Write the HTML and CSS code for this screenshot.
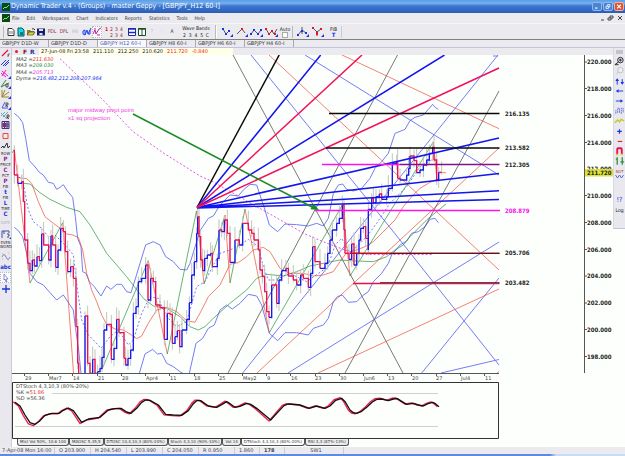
FILE: index.html
```html
<!DOCTYPE html>
<html lang="en">
<head>
<meta charset="utf-8">
<title>Dynamic Trader</title>
<link rel="stylesheet" href="styles.css">
</head>
<body>
<header class="titlebar">
  <svg class="logo" viewBox="0 0 8 8"><rect width="8" height="8" fill="#064a16"/><path d="M1 6L3 4L4 5L7 2" stroke="#7fe07f" fill="none"/></svg>
  <h1>Dynamic Trader v.4 - (Groups) - master Geppy - [GBPJPY_H12 60-I]</h1>
  <button class="win" aria-label="Minimize"><svg viewBox="0 0 9 9"><path d="M2 6.500h3" stroke="#fff" stroke-width="1.500"/></svg></button>
  <button class="win" aria-label="Restore"><svg viewBox="0 0 9 9"><path d="M2 4h3v3h-3zM4 4v-2h3v3h-2" stroke="#fff" fill="none"/></svg></button>
  <button class="win close" aria-label="Close"><svg viewBox="0 0 9 9"><path d="M2 2l5 5M7 2l-5 5" stroke="#fff" stroke-width="1.500"/></svg></button>
</header>
<nav class="menu">
  <svg class="logo" viewBox="0 0 8 8"><rect width="8" height="8" fill="#0a4a12"/><path d="M1 6L3 4L4 5L7 2" stroke="#7fe07f" fill="none"/></svg>
  <button>File</button><button>Edit</button><button>Workspaces</button><button>Chart</button><button>Indicators</button><button>Reports</button><button>Statistics</button><button>Tools</button><button>Help</button>
  <svg class="docwin" viewBox="0 0 24 8"><path d="M2 6h3M9 4h3v2h-3zM11 4v-2h3v2h-2M19 2l4 4M23 2l-4 4" stroke="#444" fill="none"/></svg>
</nav>
<div class="toolbar">
  <div class="group files">
    <button aria-label="New"><svg viewBox="0 0 10 12"><path d="M2 2.500h4l2 2v5h-6z" fill="#fff" stroke="#333"/><path d="M4 5v3M6 5v3" stroke="#444" stroke-width=".700"/></svg></button>
    <button aria-label="New chart"><svg viewBox="0 0 10 12"><path d="M2 2h4l2 2v6h-6z" fill="#18d8e8" stroke="#155"/><path d="M4 6h3v3h-3z" fill="#0a7a8a"/></svg></button>
    <button aria-label="Open"><svg viewBox="0 0 10 12"><path d="M1 9v-5h3l1 1h3v4z" fill="#8a8420"/><path d="M1 9l2-3h6l-2 3z" fill="#dcd430" stroke="#333" stroke-width=".600"/><path d="M6 3q2-1 3 1" fill="none" stroke="#333"/></svg></button>
    <button aria-label="Save"><svg viewBox="0 0 10 12"><path d="M1 2.500h8v7h-8z" fill="#15206a"/><path d="M3 3h4v2h-4zM3.500 7h3v2h-3z" fill="#dde"/></svg></button>
    <button class="wide">PDL</button><button class="wide">DPL</button><button class="off">H4</button>
  </div>
  <div class="group">
    <button aria-label="Swing"><svg viewBox="0 0 10 12"><path d="M1 5v3l2 1 2-5 1 4 3-6M1 5l2-1v5M6 8h2v-4" stroke="#1c40f0" fill="none"/></svg></button>
    <button class="on" aria-label="Swing pattern"><svg viewBox="0 0 10 12"><path d="M1 8l2-4 1 4 3-5 2-1M2 3h2M5 9h3" stroke="#c0208a" fill="none"/></svg></button>
  </div>
  <div class="nums"><span class="pick">1</span><span>2</span><span>3</span><span>4</span><span></span><span>2</span><span>3</span><span>4</span></div>
  <div class="group">
    <button aria-label="Tile rows"><svg viewBox="0 0 10 12"><path d="M1.500 2.500h7v7h-7z" fill="#fff" stroke="#2028b0"/><path d="M1 3h8M1 6.500h8" stroke="#2028b0" stroke-width="1.400"/></svg></button>
    <button aria-label="Tile columns"><svg viewBox="0 0 10 12"><path d="M1.500 2.500h7v7h-7zM5 3v7" fill="#fff" stroke="#174f20"/><path d="M1 3h8" stroke="#174f20" stroke-width="1.400"/></svg></button>
    <button class="off">?</button><button class="off">⁝</button><button>A</button>
  </div>
  <div class="bands"><span>Wave Bands</span><span>2 &nbsp;3 &nbsp;4 &nbsp;5 &nbsp;C</span></div>
  <div class="group draw">
    <button aria-label="Low swing"><svg viewBox="0 0 15 12"><path d="M3 3l3 5 3-3" stroke="#555" fill="none"/><path d="M2 2h2v2h-2zM5 7h2v2h-2zM8 4h2v2h-2zM13 8v3h-3z" fill="#1530f0"/></svg></button>
    <button aria-label="High swing"><svg viewBox="0 0 15 12"><path d="M2 8l5-5 3 4" stroke="#555" fill="none"/><path d="M6 2h2v2h-2z" fill="#e12"/><path d="M13 8v3h-3z" fill="#1530f0"/></svg></button>
    <button aria-label="Three point low"><svg viewBox="0 0 15 12"><path d="M1 8l3-4 4 4 3-4" stroke="#555" fill="none"/><path d="M0 7h2v2h-2zM3 3h2v2h-2zM7 7h2v2h-2zM13 8v3h-3zM10 3h2v2h-2z" fill="#1530f0"/></svg></button>
    <button aria-label="Three point high"><svg viewBox="0 0 15 12"><path d="M1 3l3 5 3-3 2 3 3-5" stroke="#555" fill="none"/><path d="M0 2h2v2h-2zM3 7h2v2h-2zM6 4h2v2h-2zM9 7h2v2h-2z" fill="#e12"/><path d="M13 8v3h-3z" fill="#1530f0"/></svg></button>
    <label class="auto">Auto<input type="checkbox"></label>
  </div>
  <div class="group draw last">
    <button aria-label="Low fork"><svg viewBox="0 0 15 12"><path d="M2 9l4-5 4 3M6 1v7" stroke="#555" fill="none"/><path d="M1 8h2v2h-2zM5 4h2v2h-2zM9 6h2v2h-2zM13 8v3h-3z" fill="#1530f0"/></svg></button>
    <button aria-label="High fork"><svg viewBox="0 0 15 12"><path d="M2 2l4 4 4-3M6 5v5" stroke="#555" fill="none"/><path d="M1 1h2v2h-2zM5 6h2v3h-2zM9 2h2v2h-2z" fill="#e12"/><path d="M13 8v3h-3z" fill="#1530f0"/></svg></button>
    <button class="fib"><span>FIB</span><b>T</b></button>
  </div>
</div>
<nav class="tabs">
  <button>GBPJPY D1D-W</button><button>GBPJPY D1D-D</button><button class="active">GBPJPY H12 60-I</button><button>GBPJPY H8 60-I</button><button>GBPJPY H6 60-I</button><button>GBPJPY H4 60-I</button>
</nav>
<div class="work">
  <aside class="rail left">
    <button aria-label="Trend line"><svg viewBox="0 0 11 10"><path d="M2 8l6-6" stroke="#e8123c" stroke-width="1.300"/><path d="M8 6h2M8 6v3M8 7.500h1" stroke="#444" fill="none" stroke-width=".700"/></svg></button>
    <button aria-label="Parallel lines"><svg viewBox="0 0 11 10"><path d="M1 7l5-5M3 8l6-6M5 8l4-4" stroke="#1836f0"/></svg></button>
    <button aria-label="Fork"><svg viewBox="0 0 11 10"><path d="M2 2l6 5M2 7l4-6M1 4l5 4" stroke="#f018c8"/><path d="M11 7v3h-3z" fill="#1530f0"/></svg></button>
    <button aria-label="Fan"><svg viewBox="0 0 11 10"><path d="M1 8l5-7M1 8l8-4" stroke="#2a9038"/><path d="M6 5h2v3h-2z" stroke="#555" fill="none"/><path d="M11 7v3h-3z" fill="#1530f0"/></svg></button>
    <button aria-label="Gann fan"><svg viewBox="0 0 11 10"><path d="M2 1v7h7M2 8l3-7M2 8l7-5" stroke="#9a8a20" fill="none"/><path d="M11 7v3h-3z" fill="#1530f0"/></svg></button>
    <button aria-label="Angle"><svg viewBox="0 0 11 10"><path d="M2 8l3-6M2 8h6" stroke="#4058f0"/><path d="M6 7v-4h2v2h-2l2 2" stroke="#333" fill="none" stroke-width=".800"/><path d="M11 7v3h-3z" fill="#1530f0"/></svg></button>
    <button aria-label="Channels"><svg viewBox="0 0 11 10"><path d="M1 6l4-4M3 7l5-5M1 3l5 5" stroke="#68a8b8"/><path d="M7 9v-4h2v2h-2l2 2" stroke="#333" fill="none" stroke-width=".800"/></svg></button>
    <button aria-label="Grid"><svg viewBox="0 0 11 10"><path d="M2 1.500h7v7h-7zM2 4h7M2 6h7M4.500 1v7M7 1v7" stroke="#423080" fill="#ddd"/><path d="M3 3h3v4h-3z" fill="#8a2a70"/></svg></button>
    <button aria-label="Rectangle"><svg viewBox="0 0 11 10"><path d="M3 2.500h5v5h-5z" stroke="#f04838" fill="none"/></svg></button>
    <button aria-label="Wave label"><svg viewBox="0 0 11 10"><path d="M1 7l2-2 1 2 3-5 1 5 2-2" stroke="#233" fill="none"/></svg></button>
    <button class="txt purple">ROW<b>P</b></button>
    <button class="txt purple">PRICE<b>C</b></button>
    <button class="txt purple">PCT<b>P</b></button>
    <button class="txt">FIB<b>t</b></button>
    <button class="txt">FIB<b>L</b></button>
    <button class="txt">TIME<b>C</b></button>
    <button class="txt dim">DATE</button>
    <button aria-label="Time projection"><svg viewBox="0 0 11 10"><path d="M2 9v-7h7v2M4 2v3" stroke="#4050b0" fill="none"/><path d="M7 5h2v2h-1v2" stroke="#555" fill="none"/><path d="M11 8v2h-2z" fill="#1530f0"/></svg></button>
    <button class="txt">EVEN<br>WORD</button>
    <button aria-label="Cycle"><svg viewBox="0 0 11 10"><path d="M2 6q2-5 4 0t4 0" stroke="#8a80e8" fill="none"/><path d="M2 3h1M8 2h1M2 8h1M8 9h1" stroke="#d8cc20"/></svg></button>
    <button class="txt"><b>abc</b></button>
    <button class="on" aria-label="Pointer"><svg viewBox="0 0 11 10"><path d="M4 1l4 5h-2l1 3-1 0-1-3-1 1z" fill="#fff" stroke="#5a64c8" stroke-width=".700"/></svg></button>
    <button aria-label="Crosshair"><svg viewBox="0 0 11 10"><path d="M6 1v8M2 5h8" stroke="#1836d8" stroke-width="1.300"/></svg></button>
  </aside>
  <main>
    <div class="quote"><i></i><b class="f">F</b><b class="r">R</b>
      <div class="readout"><span>27-Jun-08 Fri 23:58</span><span>211.110</span><span>212.250</span><span>210.620</span><span class="red">211.720</span><span class="red">-0.840</span></div>
    </div>
    <svg class="chart" viewBox="12 55 601 384">
      <defs><clipPath id="plot"><path d="M12 55h488v318h-488z"/></clipPath></defs>
      <g clip-path="url(#plot)">
        <g class="thin">
          <path class="gray" d="M233 55L403 373M397.500 55L228 373M345 373L499 91"/>
          <path class="blue" d="M251 55L392 230L499 365M305 55L499 175M498 55L242.700 373M288 373L499 242M421.700 373L499 278M441 373L499 359.500M493 56h5"/>
          <path class="red" d="M269 55L499 270M342 55L499 128.700M257 373L499 148M318 373L499 289M497 373l2-1.500"/>
        </g>
        <path class="dots pink" d="M60 58.700L101.700 98.700L133 131.700L165 154L200 176L213 181.700L305 234L327 243.300L347 250.700L360 254.500H433"/>
        <g transform="scale(.333333)" class="third">
          <g class="blue">
            <path d="M43 340L57 352L68 368L77 415L88 482L103 498L118 517L130 525L145 547L160 550L170 568L180 562L190 554L200 570L218 592L226 650L233 715L243 740L248 815L258 820L268 845L283 860L303 888L320 858L333 868L350 853L365 853L380 875L393 878L405 840L420 790L437 735L460 725L480 735L497 770L520 785L540 808L560 810L570 790L600 692L625 655L640 648L660 615L690 585L715 588L730 570L750 553L770 555L780 585L795 630L808 675L833 695L855 672L890 674L925 678L950 670L970 678L985 655L1000 580L1015 555L1028 552L1040 568L1060 573L1085 565L1110 535L1125 505L1145 485L1165 460L1185 400L1215 388L1230 362L1245 352L1270 345L1285 328L1298 313L1305 322L1315 328"/>
            <path d="M43 682L55 692L68 710L80 760L90 820L110 845L130 855L150 878L170 900L190 885L208 912L220 930L226 980L236 1050L243 1120M418 1120L435 1062L458 1048L472 1062L485 1060L500 1090L520 1100L540 1115L552 1122M568 1120L588 1030L608 1015L625 985L643 975L660 930L680 915L697 927L720 910L745 883L770 888L785 915L808 1000L833 1022L855 998L890 998L925 1005L940 985L970 975L985 955L1000 905L1012 890L1027 885L1045 907L1070 905L1088 887L1105 875L1120 845L1145 820L1165 790L1175 765L1200 735L1220 723L1235 700L1255 695L1275 680L1290 658L1305 655L1315 668"/>
          </g>
          <path class="red" d="M50 532L80 536L95 550L115 605L135 650L160 670L185 688L200 702L215 704L235 712L248 750L260 820L275 870L290 905L305 945L320 973L345 987L370 990L390 1002L410 1016L425 1008L445 970L470 930L500 922L530 935L560 962L585 967L605 930L625 890L660 855L690 793L715 788L740 770L760 750L790 742L810 755L840 805L870 820L910 820L940 828L970 825L1000 815L1020 785L1040 758L1070 750L1100 738L1120 725L1140 705L1155 690L1185 660L1210 620L1235 590L1260 565L1285 550L1310 538M1316 518H1338"/>
          <path class="green" d="M70 550L90 552L120 578L150 598L200 622L240 635L270 675L297 720L320 760L380 830L430 895L460 918L500 925L540 950L570 980L595 990L615 980L640 955L690 910L740 870L770 835L800 823L850 828L890 815L930 798L980 788L1020 780L1050 782L1120 785L1160 770L1185 750L1210 735L1230 710L1280 660L1310 635L1338 612"/>
          <path class="dots blue" d="M50 520L70 550L85 630L100 665L125 685L145 710L165 705L200 740L220 765L230 850L245 960L265 1005L285 1025L303 1045L330 1010L355 990L385 1035L400 1020L425 940L450 890L475 895L500 950L530 980L560 965L590 860L615 845L640 795L660 760L690 750L720 735L745 718L775 740L790 800L805 840L825 840L870 820L920 845L970 810L990 780L1005 735L1025 715L1050 760L1100 710L1130 670L1170 610L1220 560L1260 500L1295 480"/>
        </g>
        <g class="thin">
          <path class="red" d="M14.300 149L30 283M62.700 222.700L73.500 373M148.300 260.700L167.300 354M196.500 211L204 284M225 215L230 283M245 209L269.300 332.700M342.300 205L350 276M433.300 142L437 180"/>
          <path class="green" d="M12 153l2.500-4M30 283L62.700 222.700M101.700 370L148.300 260.700M167.300 354L196.500 211M204 284L225 215M230 283L245 209M269.300 332.700L342.300 205M350 276L433.300 142"/>
        </g>
        <g id="bars" transform="scale(.333333)"></g>
        <g class="fan">
          <path stroke="#080808" d="M197 207.500L279.200 55"/>
          <path stroke="#1414f0" d="M197 207.500L320.700 55M197 207.500L444.500 55M197 207.500L499 138M197 207.500L499 173.500M197 207.500L499 190.700M197 208L499 199.500"/>
          <path stroke="#f4105c" d="M197 207.500L362 55M197 207.500L499 68"/>
        </g>
        <g class="levels">
          <path stroke="#080808" d="M329 113.500H499.500M326 148H499.500"/>
          <path stroke="#ff10f0" d="M322 164.500H400M315 210.500H501"/>
          <path stroke="#85108c" d="M400 164.500H499.500"/>
          <path stroke="#c4101c" d="M350 253.200H499.500"/>
          <path stroke="#e8104c" d="M353 283.500H499.500"/>
          <path class="overlay" d="M380 282.500H499.500M390 253.500H499.500"/>
        </g>
        <path d="M133 114L312 207" stroke="#1c8a26" stroke-width="1.500"/><path d="M319 210l-8.500-.800 3-5.600z" fill="#1c8a26"/>
      </g>
      <g class="notes"><text x="68" y="112">major midway pivot point</text><text x="68" y="120">x1 sq projection</text></g>
      <g class="legend">
        <text x="16" y="61">MA2 =<tspan fill="#f03028">211.630</tspan></text><text x="16" y="67">MA3 =<tspan fill="#268a42">209.030</tspan></text>
        <text x="16" y="74">MA4 =<tspan fill="#f030dc">205.713</tspan></text><text x="16" y="80">Dyma =<tspan fill="#2030f0">216.482,212.208,207.964</tspan></text>
      </g>
      <g class="price">
        <text x="505" y="116">216.135</text><text x="505" y="150">213.582</text><text x="505" y="167">212.305</text><text x="505" y="213" fill="#f810ec">208.879</text><text x="505" y="255">205.706</text><text x="505" y="285">203.482</text>
        <text x="587" y="64">220.000</text><text x="587" y="91">218.000</text><text x="587" y="118">216.000</text><text x="587" y="145">214.000</text><text x="587" y="171">212.000</text><text x="587" y="198">210.000</text><text x="587" y="225">208.000</text><text x="587" y="252">206.000</text><text x="587" y="278">204.000</text><text x="587" y="305">202.000</text><text x="587" y="332">200.000</text><text x="587" y="359">198.000</text>
        <path fill="#dce03c" d="M585 169h28v7.500h-28z"/><text x="587" y="175">211.720</text>
      </g>
      <path class="axis" d="M584.500 55V373M585 62h2M585 88.500h2M585 115.500h2M585 142.500h2M585 195.500h2M585 222.500h2M585 249.500h2M585 276h2M585 303h2M585 329.500h2M585 356.500h2M12 373.500H499M24.500 373v3M48.500 373v3M72.500 373v3M97.500 373v3M121.500 373v3M145.500 373v3M169.500 373v3M194.500 373v3M218.500 373v3M242.500 373v3M266.500 373v3M290.500 373v3M315.500 373v3M339.500 373v3M363.500 373v3M387.500 373v3M411.500 373v3M436.500 373v3M460.500 373v3M484.500 373v3"/>
      <g class="dates"><text x="25" y="380">29</text><text x="49" y="380">Mar7</text><text x="73" y="380">14</text><text x="98" y="380">21</text><text x="122" y="380">28</text><text x="146" y="380">Apr4</text><text x="170" y="380">11</text><text x="194" y="380">18</text><text x="219" y="380">25</text><text x="243" y="380">May2</text><text x="267" y="380">9</text><text x="291" y="380">16</text><text x="315" y="380">23</text><text x="340" y="380">30</text><text x="364" y="380">Jun6</text><text x="388" y="380">13</text><text x="412" y="380">20</text><text x="436" y="380">27</text><text x="461" y="380">Jul4</text><text x="485" y="380">11</text></g>
      <path class="pane" d="M12.500 382.500H498.500V438.500H12.500z"/>
      <path stroke="#d0d0d0" d="M52 393.500H438M15 426.500H438"/>
      <g class="oscillator" transform="translate(0 370) scale(.333333)">
        <use href="#stoch" class="fast" transform="translate(-5 -9) scale(1 1.080)"/>
        <path id="stoch" d="M45 97L60 108L75 135L90 158L105 163L120 152L135 136L155 130H178L190 121L205 114L220 122L245 157L265 147L300 142L325 120L345 116L363 115L380 126L393 130L410 115L425 97L437 90L450 91L475 105L497 133L520 135L545 136L565 122L580 101L590 92L602 92L625 108L650 112L665 104L680 95L690 101L705 112L720 109L740 100L752 103L770 115L812 150L835 125L852 107L865 102L900 105L928 115L950 108L975 115L990 108L1007 91L1025 85L1036 96L1050 120L1060 128L1070 130L1085 124L1100 112L1117 96L1130 88L1145 87L1165 92L1180 87L1192 86L1205 94L1220 103L1240 100L1255 105L1270 108L1284 101L1298 97L1306 101L1317 110"/>
      </g>
      <g class="study"><text x="16" y="388">DTStoch 4,3,10,3 (80%-20%)</text><text x="16" y="394">%K =<tspan fill="#f02028">51.86</tspan></text><text x="16" y="400">%D =56.36</text></g>
    </svg>
    <div class="studies"><button>Mist Vol 50%, 10.6 100</button><button>MAOSC 5,35,5</button><button>DTOSC 10,4,10,3 (80%-20%)</button><button>Stoch 4,3,10 (90%-10%)</button><button>Vol 14</button><button class="active">DTStoch 4,3,10,3 (80%-20%)</button><button>RSI 3,3 (87%-13%)</button></div>
  </main>
  <aside class="rail right">
    <div class="grip"></div>
    <button aria-label="Zoom"><svg viewBox="0 0 12 10"><circle cx="7" cy="4" r="3" fill="#dde" stroke="#222"/><path d="M5 6l-4 3h4M5.500 4h3M7 2.500v3" stroke="#222" fill="none"/></svg></button>
    <button aria-label="Zoom out"><svg viewBox="0 0 12 10"><circle cx="7" cy="4" r="3" fill="#eee" stroke="#bbc"/><path d="M5 6l-3 3" stroke="#bbc"/></svg></button>
    <button aria-label="Scale"><svg viewBox="0 0 12 10"><path d="M3.500 9v-6M9 3v5" stroke="#1430e8"/><path d="M1.500 5l2-3 2 3zM7 6h4l-2 3z" fill="#1430e8"/></svg></button>
    <button aria-label="Scroll left"><svg viewBox="0 0 12 10"><path d="M4 5h6" stroke="#1430e8"/><path d="M5 3v4l-3-2z" fill="#1430e8"/></svg></button>
    <button aria-label="Scroll right"><svg viewBox="0 0 12 10"><path d="M2 5h6" stroke="#1430e8"/><path d="M7 3v4l3-2z" fill="#1430e8"/></svg></button>
    <button aria-label="Bars"><svg viewBox="0 0 12 10"><path d="M2 8v-4M4 7v-5h2v5M8 8v-6h2v5" stroke="#6874dc" fill="none" stroke-dasharray="2 .500"/></svg></button>
    <button aria-label="Line"><svg viewBox="0 0 12 10"><path d="M1 7l3-3 2 2 2-3 3 2" stroke="#c8c820" stroke-width="1.500" fill="none"/></svg></button>
    <button aria-label="Wider"><svg viewBox="0 0 12 10"><path d="M6 3v5M3.500 5.500h5" stroke="#1430e8" stroke-width="1.300"/></svg></button>
    <button aria-label="Narrower"><svg viewBox="0 0 12 10"><path d="M4 5.500h5" stroke="#e8204c" stroke-width="1.300"/></svg></button>
    <button aria-label="Snap"><svg viewBox="0 0 12 10"><path d="M3.500 9v-6q0-1 1-1h3q1 0 1 1v6" stroke="#e8104c" stroke-width="2" fill="none"/><path d="M2.500 9h2M7.500 9h2" stroke="#e8d820" stroke-width="2"/></svg></button>
    <button aria-label="Bar style"><svg viewBox="0 0 12 10"><path d="M3.500 1v8M2 3h1.500M9 1v8M7 6h4" stroke="#2a9038" stroke-width="1.400"/></svg></button>
    <button class="txt not">NOT<svg viewBox="0 0 10 5"><path d="M1 1l2 3 2-3 2 3 2-3" stroke="#5868e0" fill="none"/></svg></button>
    <button class="txt help"><b>!?</b></button>
    <button class="txt log">Log</button>
  </aside>
</div>
<footer class="status"><span class="when">7-Apr-08 Mon 16:00</span><span>O 203.900</span><span>H 204.540</span><span>L 203.990</span><span>C 204.050</span><span>R 0.950</span><span class="short">1.860</span><span class="short"><b>178</b></span><span class="long">SW1</span></footer>
<div class="edge"></div>
<script src="bars.js"></script>
</body>
</html>
```
FILE: styles.css
```css
* { box-sizing: border-box; }
body { margin: 0; background: #ebebef; color: #33333a; font: 5px/7px "DejaVu Sans", sans-serif; overflow-x: hidden; }
button { appearance: none; margin: 0; padding: 0; border: 0; background: none; color: inherit; font: inherit; white-space: nowrap; }
svg { display: block; }
.titlebar, .menu, .toolbar, .rail, .price { font-family: "DejaVu Sans Condensed", "DejaVu Sans", sans-serif; }

.titlebar { display: flex; align-items: center; height: 13px; padding: 0 1px 0 2px; gap: 1px; background: linear-gradient(#5c9ce4, #76b2f0 25%, #3c78d0 45%, #2c5cb8); color: #fff; }
.titlebar h1 { flex: 1; margin: 0; font-size: 7px; line-height: 9px; font-weight: 400; }
.logo { width: 8px; height: 8px; }
.win { width: 10px; height: 9px; border-radius: 2px; background: #4c84d4; border: 1px solid #8cb8f0; }
.win svg { width: 100%; height: 100%; }
.close { background: #dc5538; border-color: #eeb0a0; }

.menu { display: flex; align-items: center; height: 10px; gap: 7px; padding: 0 2px; }
.menu .logo { margin-right: -5px; }
.docwin { width: 24px; height: 8px; margin-left: auto; }

.toolbar { display: flex; align-items: center; height: 17px; padding-left: 3px; border-bottom: 1px solid #80807c; border-top: 1px solid #f6f6f8; }
.group { display: flex; align-items: center; }
.group button { width: 10px; height: 12px; }
.group button svg { width: 100%; height: 100%; }
.files { border-left: 1px solid #bbb; padding-left: 2px; margin-right: 2px; }
.group .wide { width: 12px; color: #8a3040; }
.group .off { color: #b8b8c4; }
.on { background: #fafaff; outline: 1px dotted #b8b8c4; outline-offset: -1px; }
.nums { display: grid; grid-template-columns: repeat(4, 5px); line-height: 6px; height: 12px; margin: 0 3px 0 2px; color: #902838; text-align: center; }
.pick { color: #d81030; font-weight: 700; }
.bands { display: flex; flex-direction: column; align-items: center; line-height: 7px; width: 39px; border-right: 1px solid #bbb; color: #222; }
.draw { padding-left: 3px; border-left: 1px solid #fff; }
.group.draw button { width: 15px; }
.auto { display: flex; flex-direction: column; align-items: center; width: 10px; margin-right: 2px; line-height: 6px; color: #222; }
.auto input { appearance: none; width: 6px; height: 6px; margin: 0; background: #fff; border: 1px solid #aaa; }
.last { border-left: 1px solid #bbb; border-right: 1px solid #ccc; }
.fib { line-height: 5px; color: #222; }
.fib span, .fib b { display: block; }
.fib b { color: #1530f0; font-size: 6px; }

.tabs { display: flex; height: 8px; border-bottom: 1px solid #c4c4dc; }
.tabs button { width: 49px; padding-left: 2px; text-align: left; border-right: 1px solid #aaa; }
.tabs .active { background: #f8f8ff; color: #5058a8; }

.work { display: grid; grid-template-columns: 12px minmax(0, 1fr) 12px; background: #fcfffc; }
.rail { background: #e8e8ee; border-right: 1px solid #ccccd4; }
.rail button { display: block; width: 100%; height: 10px; }
.rail button svg { width: 11px; height: 10px; }
.left button:nth-child(3n), .left button:nth-child(n + 11) { height: 11px; }
.rail .txt { font-size: 4px; line-height: 4px; text-align: center; color: #222; }
.txt b { display: block; font-size: 6px; line-height: 6px; color: #1530e0; }
.rail .purple b { color: #902090; }
.rail .dim { color: #b4b4bc; }
.right { border: 0; border-left: 1px solid #d8d8de; height: 181px; border-bottom: 1px solid #c4c4d8; }
.grip { height: 4px; margin: 2px; background: #c4c4c8; }
.rail .not { color: #b03040; height: 14px; padding-top: 3px; }
.rail .not svg { height: 5px; }
.rail .help { height: 10px; margin-top: 15px; }
.rail .help b { font-weight: 400; font-size: 7px; }
.rail .log { font-size: 5px; }

.quote { display: flex; align-items: center; height: 7px; background: #ebebef; line-height: 7px; }
.quote i { width: 3px; height: 3px; margin: 0 5px 0 3px; border-radius: 2px; background: #e81830; }
.quote b { width: 7px; font-size: 6px; }
.f { color: #801030; }
.r { color: #2030a8; }
.readout { display: flex; gap: 4px; padding: 0 25px 0 2px; margin-left: 2px; background: #fffee6; color: #26262c; }
.red { color: #f02820; }
.chart { width: 100%; height: auto; }
.chart path { fill: none; }
.chart path[fill] { fill: revert-layer; }
.thin path, .third path { stroke-width: 1px; vector-effect: non-scaling-stroke; opacity: .65; }
.gray { stroke: #333; }
.blue, .blue path { stroke: #3038f0; }
.chart .red { stroke: #f04030; }
.green { stroke: #208a34; }
.pink { stroke: #f050e8; }
.chart .dots { stroke-dasharray: 2 2; vector-effect: non-scaling-stroke; }
.fan { stroke-width: 1.5px; }
.levels { stroke-width: 1.5px; }
.overlay { stroke: #222; stroke-width: 1px; opacity: .75; }
.wick { stroke: #c4c4bc; stroke-width: 3px; }
.up { stroke: #1818f0; stroke-width: 4px; }
.down { stroke: #f01058; stroke-width: 4px; }
.oscillator { stroke: #101010; stroke-width: 4px; stroke-linejoin: round; }
.fast { stroke: #f02050; }
.axis { stroke: #555; }
.pane { stroke: #333; }
.notes { font: 6px "Liberation Sans", sans-serif; fill: #f838e8; }
.legend { font-style: italic; fill: #444; }
.price { font-weight: 700; font-size: 6px; fill: #222; }
.dates { fill: #444; }
.study { fill: #444; }
.studies { display: flex; height: 8px; padding-left: 5px; font-size: 4px; line-height: 6px; }
.studies button { height: 7px; padding: 0 2px; border: 1px solid #555; border-top: 0; background: #ececec; border-radius: 0 0 3px 3px; }
.studies .active { background: #fff; }

.status { display: flex; height: 7px; line-height: 7px; color: #44444c; }
.status span { width: 36px; padding-left: 4px; border-left: 1px solid #ccccd4; white-space: nowrap; }
.status .when { width: 54px; padding-left: 2px; border: 0; }
.status .short { width: 25px; }
.status .long { width: 60px; text-align: center; border-right: 1px solid #ccccd4; }
.edge { height: 2px; background: linear-gradient(90deg, #5c8ce0 88%, #c8dcf4 89%); }
```
FILE: bars.js
```js
// Each run: origin of the run, then x,level pairs; a step is drawn at every x.
const runs = [
  [0, 270, "43,180 43,255 53,280 65,275 70,335 74,450 83,520 90,542 97,510 103,528 111,500 118,512 125,432 131,465 146,510 153,438 158,465 167,532 174,480 182,415 190,425 196,485 203,545 212,530 220,565 228,710 233,820 236,850"],
  [0, 690, "255,430 255,258 263,400 270,430 278,388 285,430 293,425 300,415 306,382 312,300 320,283 334,388 342,355 350,268 357,308 372,385 377,405 384,385 392,360 400,250 408,230 415,155 425,145 437,105 444,210 452,145 460,155 467,225 480,233 493,328 502,250 510,253 517,340 525,320 532,302 539,350 546,300 560,268 568,218 575,135 583,95 590,10 593,-40 597,20 602,90 608,122 614,85 622,75 632,70 637,110 652,85 657,0 665,5 673,-30 682,10 690,97 705,30 718,45 728,-20 745,0 755,10 762,30 775,60 780,120 787,140 794,185 800,245 807,262 815,165 830,220 837,150 845,122 858,115 865,138 880,150 890,165 902,135 910,145 925,172 932,130 938,50 945,95 960,115 975,100 983,70 990,30 997,0 1010,-20 1018,-35 1027,-75 1032,0 1035,70 1047,88 1055,42 1062,105 1070,70 1077,30 1082,-5 1090,-10 1097,25 1105,60 1105,-62 1115,-95 1120,-82 1128,-100 1138,-108 1145,-92 1160,-100 1165,-125 1177,-200 1190,-205 1193,-155 1200,-150 1220,-165 1226,-185 1230,-222 1242,-208 1250,-172 1260,-180 1270,-195 1280,-210 1288,-230 1298,-248 1302,-210 1310,-150 1316,-173 1325,-173"]
];
const layer = document.getElementById("bars");
function stroke(name, d) {
  const p = document.createElementNS("http://www.w3.org/2000/svg", "path");
  p.setAttribute("class", name);
  p.setAttribute("d", d);
  layer.append(p);
}
for (const [ox, oy, text] of runs) {
  const pts = text.split(" ").map(s => s.split(",").map(Number)).map(([x, y]) => [x + ox, y + oy]);
  pts.slice(1).forEach(([x, y], i) => {
    const prev = pts[i][1];
    const reach = 14 + (i * 17) % 26;
    stroke("wick", `M${x} ${Math.min(y, prev) - reach}V${Math.max(y, prev) + 40 - reach}`);
  });
  pts.slice(1).forEach(([x, y], i) => {
    const [px, py] = pts[i];
    stroke(y < py ? "up" : "down", `M${px} ${py}H${x}V${y}`);
  });
}
```
